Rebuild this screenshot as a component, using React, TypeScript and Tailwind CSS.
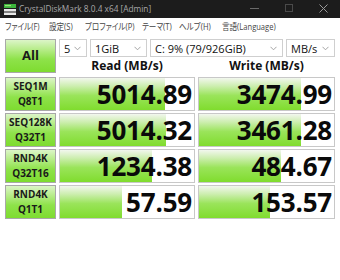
import React from "react";

const rows = [
  { a: "SEQ1M", b: "Q8T1", r: "5014.89", w: "3474.99", rb: 105, wb: 102 },
  { a: "SEQ128K", b: "Q32T1", r: "5014.32", w: "3461.28", rb: 106, wb: 102 },
  { a: "RND4K", b: "Q32T16", r: "1234.38", w: "484.67", rb: 92, wb: 82 },
  { a: "RND4K", b: "Q1T1", r: "57.59", w: "153.57", rb: 62, wb: 71 },
];

const greenBtn =
  "border border-[#a8a8a8] bg-[linear-gradient(to_bottom,#dcf5c8_0%,#b6ec88_30%,#8ee24a_60%,#7edc30_100%)] flex flex-col items-center justify-center text-[#1a1a1a] font-bold";

function Combo({ w, text }: { w: string; text: string }) {
  return (
    <div className={`${w} h-[18px] border border-[#cfcfcf] bg-white flex items-center justify-between pl-[4px] pr-[5px]`}>
      <span className="text-[11px] text-[#111] leading-none whitespace-nowrap">{text}</span>
      <svg width="7" height="5" viewBox="0 0 7 5">
        <path d="M0.5 0.8 L3.5 3.8 L6.5 0.8" fill="none" stroke="#9a9a9a" strokeWidth="0.9" />
      </svg>
    </div>
  );
}

function Cell({ value, bar, w }: { value: string; bar: number; w: string }) {
  return (
    <div className={`${w} h-[34px] border border-[#c8c8c8] bg-white relative overflow-hidden flex items-center justify-end pr-[2px]`}>
      <div
        className="absolute left-0 top-0 bottom-0 bg-[linear-gradient(to_bottom,#f2f7ee_0%,#cdeeb0_25%,#9ae45a_55%,#80dc2e_100%)]"
        style={{ width: bar }}
      />
      <span className="relative text-[26px] font-bold text-[#0a0a0a] leading-none tracking-[-0.2px]">{value}</span>
    </div>
  );
}

const menuCls =
  "absolute top-0 inline-block whitespace-nowrap origin-left scale-x-[0.84] [font-feature-settings:'palt']";

export default function App() {
  return (
    <div className="w-[340px] h-[280px] bg-white overflow-hidden" style={{ fontFamily: '"Open Sans", "Noto Sans", "Noto Sans CJK JP", sans-serif' }}>
      {/* Title bar */}
      <div className="h-[18px] bg-[#1c1c1c] flex items-center relative">
        <svg className="ml-[4px]" width="12" height="11" viewBox="0 0 12 11">
          <rect x="0" y="0" width="12" height="4" fill="#3cb43c" />
          <rect x="0" y="5" width="12" height="2.5" fill="#e8e8e8" />
          <rect x="0" y="8.5" width="12" height="2.5" fill="#e8e8e8" />
          <rect x="1" y="1" width="6" height="1.2" fill="#9be07a" />
        </svg>
        <span className="ml-[3px] text-[8.3px] text-[#a8a8a8] leading-none">CrystalDiskMark 8.0.4 x64 [Admin]</span>
        <span className="absolute left-[250px] top-[8px] w-[9px] h-[1px] bg-[#6a6a6a]" />
        <span className="absolute left-[285px] top-[4px] w-[8px] h-[8px] border border-[#4a4a4a]" />
        <svg className="absolute left-[319px] top-[4px]" width="9" height="9" viewBox="0 0 9 9">
          <path d="M0.5 0.5 L8.5 8.5 M8.5 0.5 L0.5 8.5" stroke="#9a9a9a" strokeWidth="1" />
        </svg>
      </div>
      {/* Menu */}
      <div className="h-[17px] relative text-[9px] text-[#444] leading-[17px]">
        <span className={`${menuCls} left-[5px]`}>ファイル(F)</span>
        <span className={`${menuCls} left-[49px]`}>設定(S)</span>
        <span className={`${menuCls} left-[85px]`}>プロファイル(P)</span>
        <span className={`${menuCls} left-[142px]`}>テーマ(T)</span>
        <span className={`${menuCls} left-[179px]`}>ヘルプ(H)</span>
        <span className={`${menuCls} left-[222px]`}>言語(Language)</span>
      </div>
      {/* Main */}
      <div className="pl-[5px] pt-[4px] flex flex-col gap-[2px]">
        <div className="flex gap-[3px] mb-[2px]">
          <div className={`${greenBtn} w-[51px] h-[34px] text-[13px]`}>All</div>
          <div className="flex flex-col">
            <div className="flex gap-[3px]">
              <Combo w="w-[28px]" text="5" />
              <Combo w="w-[57px]" text="1GiB" />
              <Combo w="w-[133px]" text="C: 9% (79/926GiB)" />
              <Combo w="w-[49px]" text="MB/s" />
            </div>
            <div className="flex gap-[3px] mt-[2px]">
              <div className="w-[136px] text-center text-[12px] font-bold text-[#111] leading-[14px]">Read (MB/s)</div>
              <div className="w-[137px] text-center text-[12px] font-bold text-[#111] leading-[14px]">Write (MB/s)</div>
            </div>
          </div>
        </div>
        {rows.map((r, i) => (
          <div key={i} className="flex gap-[3px]">
            <div className={`${greenBtn} w-[51px] h-[34px] text-[10px] leading-[15px]`}>
              <span>{r.a}</span>
              <span>{r.b}</span>
            </div>
            <Cell w="w-[136px]" value={r.r} bar={r.rb} />
            <Cell w="w-[137px]" value={r.w} bar={r.wb} />
          </div>
        ))}
      </div>
    </div>
  );
}
